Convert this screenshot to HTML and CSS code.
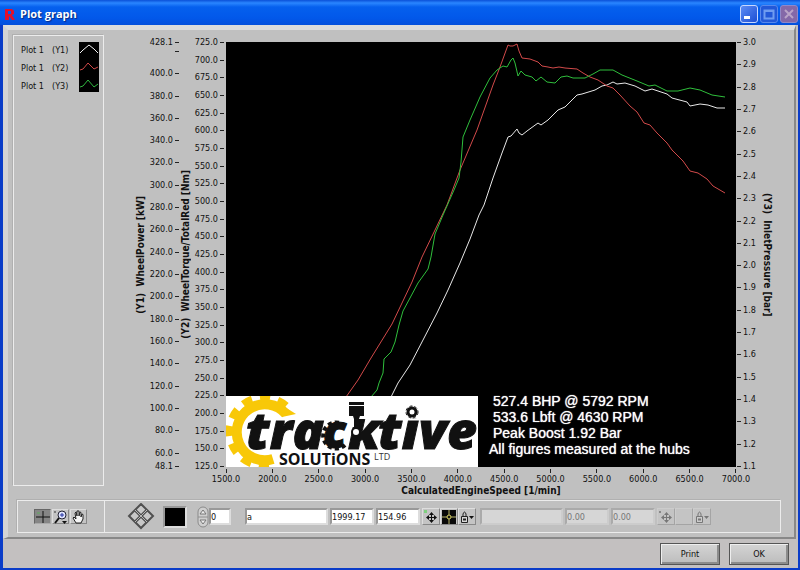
FILE: index.html
```html
<!DOCTYPE html>
<html lang="en">
<head>
<meta charset="utf-8">
<title>Plot graph</title>
<link rel="stylesheet" href="styles.css">
</head>
<body>
<div class="window">
  <header class="titlebar">
    <svg class="app-icon" width="10" height="12" viewBox="0 0 10 12" aria-hidden="true"><path d="M0 1h7l2 2v3L7 7l3 5H7L4 8v4H0zM3 3v3h3V3z" fill="#e0102c" fill-rule="evenodd"/></svg>
    <h1>Plot graph</h1>
    <div class="window-buttons">
      <button class="win-btn" aria-label="Minimize"><svg width="16" height="16" viewBox="0 0 16 16"><path d="M3 10h6v3H3z" fill="#fff"/></svg></button>
      <button class="win-btn dim" aria-label="Maximize"><svg width="16" height="16" viewBox="0 0 16 16"><path d="M3.500 4.500h9v8h-9zM3 5h10" fill="none" stroke="#6f9cf0" stroke-width="2"/></svg></button>
      <button class="win-btn close" aria-label="Close"><svg width="16" height="16" viewBox="0 0 16 16"><path d="M4 4l8 8M12 4l-8 8" stroke="#b9a3c8" stroke-width="2"/></svg></button>
    </div>
  </header>

  <main class="panel">
    <div class="work">
      <section class="legend">
        <ul>
          <li><span>Plot 1</span><span>(Y1)</span></li>
          <li><span>Plot 1</span><span>(Y2)</span></li>
          <li><span>Plot 1</span><span>(Y3)</span></li>
        </ul>
        <svg class="swatches" width="20" height="50" viewBox="0 0 20 50" fill="none" aria-hidden="true">
          <path d="M1 11l3-3 6-5 5 4 4 4" stroke="#f4f4f4"/>
          <path d="M1 28l3-1 5-6 6 6 4-2" stroke="#d04848"/>
          <path d="M1 45l3-1 5-6 6 7 4-3" stroke="#30b840"/>
        </svg>
      </section>

      <section class="chart">
        <h2 class="axis-title up y1-title">(Y1)&nbsp; WheelPower [kW]</h2>
        <ul class="axis left y1">
          <li class="w8">428.1</li><li class="w20"></li><li>400.0</li><li>380.0</li><li>360.0</li><li>340.0</li><li>320.0</li><li>300.0</li><li>280.0</li><li>260.0</li><li>240.0</li><li>220.0</li><li>200.0</li><li>180.0</li><li>160.0</li><li>140.0</li><li>120.0</li><li>100.0</li><li>80.0</li><li class="w12">60.0</li><li>48.1</li>
        </ul>
        <h2 class="axis-title up y2-title">(Y2)&nbsp; WheelTorque/TotalRed [Nm]</h2>
        <ul class="axis left">
          <li>725.0</li><li>700.0</li><li>675.0</li><li>650.0</li><li>625.0</li><li>600.0</li><li>575.0</li><li>550.0</li><li>525.0</li><li>500.0</li><li>475.0</li><li>450.0</li><li>425.0</li><li>400.0</li><li>375.0</li><li>350.0</li><li>325.0</li><li>300.0</li><li>275.0</li><li>250.0</li><li>225.0</li><li>200.0</li><li>175.0</li><li>150.0</li><li>125.0</li>
        </ul>

        <div class="plot">
          <svg class="curves" viewBox="226 42 510 425" preserveAspectRatio="none" role="img" aria-label="Power, torque and inlet pressure against engine speed">
            <polyline stroke="#e8e8e8" points="391,397 398,383 410,365 423,340 437,313 448,290 460,263 470,239 479,215 484,205 493,178 502,153 508,137 511,136 517,129 519,133 522,135 527,131 538,123 541,125 548,120 558,110 565,107 577,95 582,94 595,90 602,86 607,85 613,82 617,84 625,83 635,86 645,91 652,89 667,94 672,98 687,102 690,106 700,104 708,105 717,108 725,108"/>
            <polyline stroke="#d24a4a" points="346,397 358,380 371,358 392,324 402,303 412,282 422,257 435,230 447,205 460,170 477,130 493,85 500,67 508,45 510,46 513,46 517,44 519,51 522,58 530,59 538,62 542,66 548,67 553,68 559,67 565,68 577,69 583,73 590,77 598,80 607,86 613,88 620,95 630,106 637,112 644,123 650,125 657,133 667,143 672,150 683,161 690,171 698,173 707,179 713,186 725,193"/>
            <polyline stroke="#2fbf3c" points="371,397 377,390 379,383 383,373 384,359 391,352 395,342 399,325 403,311 410,298 418,283 428,269 431,257 435,234 443,215 454,190 459,178 461,162 463,137 470,120 480,97 490,78 497,70 503,66 507,67 511,60 513,58 515,63 518,76 521,71 525,75 532,77 536,81 541,77 547,82 555,83 561,77 567,76 573,78 585,78 593,74 600,70 613,70 622,75 637,81 649,86 655,85 667,91 678,91 690,88 700,90 712,95 725,97"/>
          </svg>
          <div class="overlay">
            <svg class="logo" width="252" height="71" viewBox="0 0 252 71" role="img" aria-label="tracktive solutions ltd">
              <rect width="252" height="71" fill="#fff"/>
              <path d="M60 18A28 28 0 1 0 47 63" fill="none" stroke="#f8c808" stroke-width="10"/>
              <path d="M60 10A34 34 0 1 0 48 68" fill="none" stroke="#f8c808" stroke-width="8" stroke-dasharray="10 8"/>
              <path d="M53 8l9 5 8 5-14 3z" fill="#f8c808"/>
              <g class="brand">
                <text x="20" y="53">tra</text>
                <text class="gear-letter" x="97" y="52">c</text>
                <text x="122" y="53">k</text>
                <text x="152" y="53">tive</text>
              </g>
              <path d="M120 0h30v23h-18l-1 8h-9z" fill="#fff"/>
              <path d="M119 30A13 13 0 1 0 119 49" fill="none" stroke="#111" stroke-width="4" stroke-dasharray="4 3"/>
              <path d="M123 6h15v3h-15zM123 10h15v10h-4l-1 3h-5l-1-3h-4zM128 22h5l1 13h-6z" fill="#111"/>
              <circle cx="130" cy="36" r="4" fill="#fff" stroke="#111" stroke-width="2"/>
              <path d="M176 6h22v16h-22z" fill="#fff"/>
              <circle cx="186" cy="16" r="4" fill="#fff" stroke="#111" stroke-width="3"/>
              <circle cx="186" cy="16" r="6" fill="none" stroke="#111" stroke-width="1" stroke-dasharray="3 2"/>
              <text class="sub" x="53" y="69">SOLUTiONS</text>
              <text class="ltd" x="148" y="64">LTD</text>
            </svg>
            <div class="caption">
              <p>527.4 BHP @ 5792 RPM</p>
              <p>533.6 Lbft @ 4630 RPM</p>
              <p>Peak Boost 1.92 Bar</p>
              <p class="outdent">All figures measured at the hubs</p>
            </div>
          </div>
        </div>

        <ul class="axis right">
          <li>3.0</li><li>2.9</li><li>2.8</li><li>2.7</li><li>2.6</li><li>2.5</li><li>2.4</li><li>2.3</li><li>2.2</li><li>2.1</li><li>2.0</li><li>1.9</li><li>1.8</li><li>1.7</li><li>1.6</li><li>1.5</li><li>1.4</li><li>1.3</li><li>1.2</li><li>1.1</li>
        </ul>
        <h2 class="axis-title y3-title">(Y3)&nbsp; InletPressure [bar]</h2>

        <div class="x-axis">
          <ul>
            <li>1500.0</li><li>2000.0</li><li>2500.0</li><li>3000.0</li><li>3500.0</li><li>4000.0</li><li>4500.0</li><li>5000.0</li><li>5500.0</li><li>6000.0</li><li>6500.0</li><li>7000.0</li>
          </ul>
          <h2 class="x-title">CalculatedEngineSpeed [1/min]</h2>
        </div>
      </section>
    </div>

    <div class="toolbar">
      <div class="palette">
        <button class="tool pressed" aria-label="Cursor tool"><svg width="16" height="14" viewBox="0 0 16 14"><path d="M1 7h5M10 7h5M8 1v4M8 9v4M6 7h4M8 5v4" stroke="#111"/><path d="M2 3h3" stroke="#5fae5f"/></svg></button>
        <button class="tool" aria-label="Zoom tool"><svg width="16" height="14" viewBox="0 0 16 14" fill="none"><circle cx="9" cy="5" r="4" fill="#dfe4ff" stroke="#223"/><path d="M7 5h4M9 3v4" stroke="#2230a0"/><path d="M6 8l-4 5" stroke="#111" stroke-width="2"/><path d="M1 2h2" stroke="#333"/><path d="M9 11h5l-2.500 3z" fill="#111"/></svg></button>
        <button class="tool" aria-label="Pan tool"><svg width="16" height="14" viewBox="0 0 16 14"><path d="M5 13L2 8l1-1 2 2-1-6 1-1 1 4V1h2v5l1-4 1 .500V7l1-3 1 .500L12 9l-2 4z" fill="#f4f4f4" stroke="#222"/></svg></button>
      </div>
      <div class="cursor-bar">
        <svg class="nudge" width="28" height="28" viewBox="0 0 28 28" aria-hidden="true"><path d="M14 1l12 12-12 12L2 13z" fill="#c8c8c8" stroke="#505050" stroke-width="2"/><path d="M8 7l12 12M20 7L8 19" stroke="#505050" stroke-width="3"/><path d="M8 7l12 12M20 7L8 19" stroke="#b8b8b8"/></svg>
        <button class="color-box" aria-label="Cursor colour"></button>
        <div class="spin">
          <svg width="12" height="22" viewBox="0 0 12 22" aria-hidden="true"><rect x="1" y="1" width="10" height="20" rx="5" fill="#cfcfcf" stroke="#8a8a8a"/><path d="M1 11h10" stroke="#909090"/><path d="M6 4l3 4H3zM6 18l3-4H3z" fill="#eee" stroke="#777"/></svg>
          <input class="f-index" aria-label="Cursor index" value="0">
        </div>
        <div class="cursor first">
          <input class="f-name" aria-label="Cursor name" value="a">
          <input class="f-num" aria-label="Cursor X" value="1999.17">
          <input class="f-num" aria-label="Cursor Y" value="154.96">
          <div class="tools">
            <button class="tool" aria-label="Cursor movement"><svg width="16" height="16" viewBox="0 0 16 16"><path d="M5 8.500h8M8.500 5v8" stroke="#111"/><path d="M8.500 3l2.500 3h-5zM8.500 14l2.500-3h-5zM3 8.500l3-2.500v5zM14 8.500l-3-2.500v5z" fill="#111"/><path d="M1 1h3v3H1z" fill="#7fd07f"/></svg></button>
            <button class="tool" aria-label="Cursor style"><svg width="16" height="16" viewBox="0 0 16 16"><path d="M1 1h14v14H1z" fill="#080808"/><path d="M8 1v14M1 8h14" stroke="#b8b46a"/><circle cx="8" cy="8" r="2" fill="#111" stroke="#d8d060"/></svg></button>
            <button class="tool" aria-label="Lock cursor"><svg width="16" height="16" viewBox="0 0 16 16"><path d="M4 8V5q1.500-4 3 0v3" fill="none" stroke="#222"/><path d="M2.500 7.500h6v6h-6z" fill="#d8d8d8" stroke="#222"/><path d="M4 10.500h3" stroke="#222" stroke-width="2"/><path d="M10 7h5l-2.500 3z" fill="#111"/></svg></button>
          </div>
        </div>
        <div class="cursor second">
          <input class="f-name" aria-label="Second cursor name" value="" disabled>
          <input class="f-num" aria-label="Second cursor X" value="0.00" disabled>
          <input class="f-num" aria-label="Second cursor Y" value="0.00" disabled>
          <div class="tools">
            <button class="tool" aria-label="Second cursor movement" disabled><svg width="16" height="16" viewBox="0 0 16 16"><path d="M5 8.500h8M8.500 5v8" stroke="#777"/><path d="M8.500 3l2.500 3h-5zM8.500 14l2.500-3h-5zM3 8.500l3-2.500v5zM14 8.500l-3-2.500v5z" fill="#777"/><path d="M1 2h2v2H1z" fill="#888"/></svg></button>
            <button class="tool" aria-label="Second cursor style" disabled></button>
            <button class="tool" aria-label="Lock second cursor" disabled><svg width="16" height="16" viewBox="0 0 16 16"><path d="M4 8V5q1.500-4 3 0v3" fill="none" stroke="#777"/><path d="M2.500 7.500h6v6h-6z" fill="#ccc" stroke="#777"/><path d="M4 10.500h3" stroke="#777" stroke-width="2"/><path d="M10 7h5l-2.500 3z" fill="#777"/></svg></button>
          </div>
        </div>
      </div>
    </div>
  </main>

  <footer class="actions">
    <button>Print</button>
    <button>OK</button>
  </footer>
</div>
</body>
</html>
```
FILE: styles.css
```css
* { box-sizing: border-box; }

body {
  margin: 0;
  background: #c0c0c0;
  color: #111;
  font: 9px/12px "DejaVu Sans Condensed", "DejaVu Sans", sans-serif;
}

h1, h2, p, ul { margin: 0; padding: 0; }
ul { list-style: none; }
svg { display: block; }
button, input { font: inherit; color: inherit; padding: 0; margin: 0; }

.window {
  display: flex;
  flex-direction: column;
  min-height: 100vh;
  border: solid #0a3cc8;
  border-width: 0 2px 2px 3px;
  background: #c3c0c0;
}

.titlebar {
  display: flex;
  align-items: center;
  gap: 5px;
  height: 25px;
  margin: 0 -2px 0 -3px;
  padding: 2px 2px 0 5px;
  background: linear-gradient(#0a50d8, #2a86ff 3px, #0560ee 7px, #0258ea 18px, #0450dc);
  color: #fff;
}
.titlebar h1 {
  flex: 1;
  font: bold 11px/16px "Open Sans", sans-serif;
  text-shadow: 1px 1px 1px #0a2a80;
}
.window-buttons { display: flex; gap: 2px; }
.win-btn {
  width: 18px;
  height: 18px;
  border: 1px solid #c8d8ff;
  border-radius: 3px;
  background: linear-gradient(135deg, #5c8cf4, #1c4ed4);
}
.win-btn.dim { border-color: #5888ec; background: #2258d8; }
.win-btn.close { border-color: #9088c8; background: #8468a8; }

.panel {
  flex: 1;
  display: flex;
  flex-direction: column;
  margin-right: 2px;
  border: solid;
  border-width: 5px 2px 2px 5px;
  border-color: #dcdcdc #888 #888 #d4d4d4;
  background: #c0c0c0;
}

.work { flex: 1; display: flex; }

.legend {
  display: flex;
  align-items: flex-start;
  justify-content: space-between;
  width: 91px;
  margin: 5px 0 11px 5px;
  padding: 6px 4px 0 7px;
  border: 1px solid #ececec;
  box-shadow: -1px -1px 0 #b0b0b0;
}
.legend li { display: flex; gap: 8px; height: 18px; line-height: 16px; }
.swatches { background: #000; }

.chart {
  flex: 1;
  display: grid;
  grid-template-columns: 14px 32px 12px 34px 1fr 22px 18px;
  grid-template-rows: 1fr auto;
  padding: 12px 18px 0 30px;
}

.axis { display: flex; flex-direction: column; line-height: 0; }
.axis li { display: flex; flex: 20 0 0; min-height: 0; }
.axis li:last-child { flex: 0 0 1px; }
.axis .w8 { flex-grow: 8; }
.axis .w12 { flex-grow: 12; }
.axis li::before, .axis li::after { width: 4px; height: 1px; background: #222; }
.left li { justify-content: flex-end; }
.left li::after { content: ""; margin: 0 2px; }
.y1 li::after { margin-right: 1px; }
.right li::before { content: ""; margin: 0 2px 0 1px; }

.axis-title {
  align-self: center;
  justify-self: center;
  writing-mode: vertical-rl;
  font-size: 10px;
  line-height: 12px;
  white-space: nowrap;
}
.up { transform: rotate(180deg); }

.plot { position: relative; background: #000; }
.curves { position: absolute; width: 100%; height: 100%; fill: none; }
.curves polyline { vector-effect: non-scaling-stroke; }
.overlay {
  position: absolute;
  left: 0;
  bottom: 0;
  display: flex;
  align-items: flex-end;
  gap: 11px;
}

.brand { font: italic 800 52px "Open Sans", sans-serif; fill: #111; stroke: #111; stroke-width: 1px; }
.gear-letter { font-size: 46px; }
.sub { font: bold 16px "Open Sans", sans-serif; fill: #111; }
.ltd { font: 9px "Open Sans", sans-serif; fill: #333; }

.caption {
  padding-bottom: 10px;
  color: #fff;
  font: 14px/16px "Liberation Sans", Arial, sans-serif;
  text-shadow: 0 0 1px #fff;
  white-space: nowrap;
}
.caption p { padding-left: 4px; }
.caption .outdent { padding-left: 0; }

.x-axis { grid-column: 5; }
.x-axis ul { display: flex; margin: 0 calc(100% / -22); }
.x-axis li {
  flex: 1 0 0;
  display: flex;
  flex-direction: column;
  align-items: center;
}
.x-axis li::before { content: ""; width: 1px; height: 4px; margin: 2px 0 0; background: #222; }
.x-title { font-size: 10px; line-height: 12px; text-align: center; }

.toolbar {
  display: flex;
  margin: 3px 13px 4px 9px;
  border: 1px solid #ececec;
  box-shadow: -1px -1px 0 #b0b0b0;
}
.palette {
  display: flex;
  align-items: center;
  gap: 1px;
  width: 87px;
  padding-left: 16px;
  border-right: 1px solid #ececec;
}
.cursor-bar { flex: 1; display: flex; align-items: center; height: 31px; padding-left: 22px; }

.tool {
  display: grid;
  place-items: center;
  width: 18px;
  height: 17px;
  border: 1px solid;
  border-color: #dedede #888 #888 #dedede;
  background: #c4c4c4;
}
.palette .tool { width: 17px; height: 15px; }
.tool.pressed { background: #868686; border-color: #666 #aaa #aaa #666; }
.tool:disabled { border-color: #ccc #a4a4a4 #a4a4a4 #ccc; }
.tools { display: flex; }

.color-box {
  width: 24px;
  height: 22px;
  margin: 0 10px 0 8px;
  border: 2px solid;
  border-color: #999 #ddd #ddd #999;
  background: #000;
}
.spin { display: flex; align-items: center; }

input {
  height: 17px;
  min-width: 0;
  border: 2px solid;
  border-color: #999 #ddd #ddd #999;
  border-radius: 0;
  background: #fff;
}
input:disabled { background: #d6d6d6; border-color: #aaa #ccc #ccc #aaa; color: #777; }
.f-index { width: 22px; }
.f-name { width: 83px; }
.f-num { width: 44px; }

.cursor { display: flex; align-items: center; gap: 2px; }
.first { margin-left: 14px; }
.second { margin-left: 4px; }

.actions { display: flex; justify-content: flex-end; gap: 9px; padding: 4px 9px 3px; }
.actions button {
  width: 60px;
  height: 22px;
  border: 1px solid #555;
  background: linear-gradient(#d4d4d4, #bcbcbc);
  box-shadow: inset 1px 1px 0 #eee, inset -2px -2px 0 #8c8c8c;
}
```
